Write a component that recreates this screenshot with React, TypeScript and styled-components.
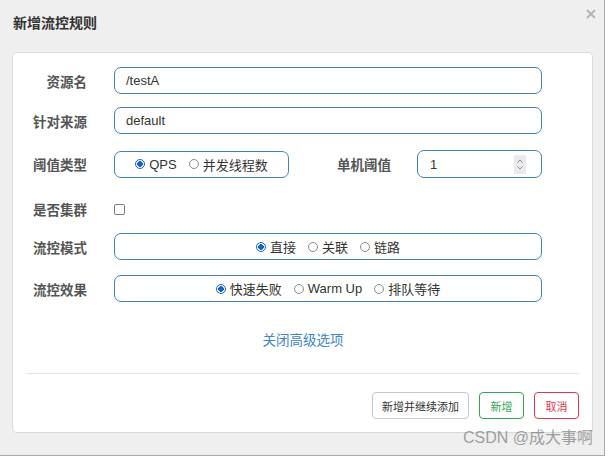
import React from "react";
import styled, { createGlobalStyle, css } from "styled-components";

const GlobalStyle = createGlobalStyle`
  html, body {
    margin: 0;
    padding: 0;
    background: #fff;
  }
  body {
    font-family: "Liberation Sans", "Noto Sans CJK SC", sans-serif;
  }
  * {
    box-sizing: border-box;
  }
`;

const FONT = `"Liberation Sans", "Noto Sans CJK SC", sans-serif`;
const BLUE = "#3f80c2";

const Page = styled.div`
  position: relative;
  width: 608px;
  height: 457px;
`;

const Dialog = styled.div`
  width: 605px;
  height: 456px;
  background: #efefef;
  border-right: 1px solid #a9a9a9;
  border-bottom: 1px solid #a9a9a9;
`;

const Header = styled.div`
  height: 52px;
  display: flex;
  justify-content: space-between;
  align-items: flex-start;
  padding: 9px 8px 0 13px;
`;

const Title = styled.h3`
  margin: 5px 0 0;
  font-size: 14px;
  line-height: 18px;
  font-weight: 700;
  color: #333;
`;

const Close = styled.button`
  display: flex;
  padding: 0;
  border: 0;
  background: none;
  cursor: pointer;
`;

const Card = styled.div`
  margin-left: 12px;
  width: 581px;
  background: #fff;
  border: 1px solid #dadada;
  border-radius: 5px;
  padding: 14px 13px 13px 14px;
`;

const FormRow = styled.div<{ $mt: number; $h?: number }>`
  display: grid;
  grid-template-columns: 60px 428px;
  column-gap: 27px;
  align-items: center;
  height: ${(p) => p.$h ?? 27}px;
  margin-top: ${(p) => p.$mt}px;
`;

const Label = styled.label`
  text-align: right;
  font-size: 13.5px;
  font-weight: 700;
  color: #555;
  white-space: nowrap;
`;

const TextInput = styled.input`
  width: 100%;
  height: 27px;
  border: 1px solid ${BLUE};
  border-radius: 7px;
  padding: 0 11px;
  font: 13px ${FONT};
  color: #333;
  background: #fff;
  outline: none;
`;

const RadioBox = styled.div<{ $width?: number }>`
  width: ${(p) => (p.$width ? `${p.$width}px` : "100%")};
  height: 27px;
  border: 1px solid ${BLUE};
  border-radius: 7px;
  display: flex;
  align-items: center;
  justify-content: center;
  gap: 12px;
`;

const RadioItem = styled.label`
  display: inline-flex;
  align-items: center;
  gap: 4px;
  font-size: 13px;
  color: #333;
  white-space: nowrap;
`;

const Dot = styled.span<{ $checked?: boolean }>`
  width: 10px;
  height: 10px;
  border-radius: 50%;
  flex: none;
  ${(p) =>
    p.$checked
      ? css`
          border: 1px solid #0f62d0;
          background: radial-gradient(circle, #0f62d0 0 2.6px, #fff 3px);
        `
      : css`
          border: 1px solid #8a8a8a;
          background: #fff;
        `}
`;

const ThresholdLine = styled.div`
  display: grid;
  grid-template-columns: 175px 76px 125px;
  column-gap: 26px;
  align-items: center;
`;

const SubLabel = styled(Label)`
  text-align: right;
`;

const NumberField = styled.div`
  height: 28px;
  border: 1px solid ${BLUE};
  border-radius: 7px;
  display: flex;
  align-items: center;
  padding: 0 15px 0 12px;
`;

const NumberValue = styled.input`
  flex: 1;
  min-width: 0;
  border: 0;
  padding: 0;
  outline: none;
  font: 13px ${FONT};
  color: #333;
  background: transparent;
`;

const Spinner = styled.span`
  width: 12px;
  height: 19px;
  background: #e9e9ee;
  display: flex;
  align-items: center;
  justify-content: center;
`;

const CheckBox = styled.span`
  width: 11px;
  height: 11px;
  border: 1.5px solid #7b7b8e;
  border-radius: 2px;
  background: #fff;
`;

const AdvancedLink = styled.a`
  display: block;
  margin-top: 29px;
  text-align: center;
  font-size: 13.5px;
  line-height: 20px;
  color: #3a87c9;
  text-decoration: none;
  cursor: pointer;
`;

const Divider = styled.div`
  height: 1px;
  margin-top: 22px;
  background: #e4e4e4;
`;

const ButtonRow = styled.div`
  margin-top: 18px;
  display: flex;
  justify-content: flex-end;
  gap: 10px;
`;

const buttonColors = {
  default: { border: "#c8c8c8", color: "#333" },
  success: { border: "#2fa84f", color: "#2fa84f" },
  danger: { border: "#e0394a", color: "#e0394a" },
};

const Button = styled.button<{ $variant: keyof typeof buttonColors }>`
  height: 27px;
  min-width: 45px;
  padding: 0 9px;
  border-radius: 4px;
  background: #fff;
  font: 11px ${FONT};
  border: 1px solid ${(p) => buttonColors[p.$variant].border};
  color: ${(p) => buttonColors[p.$variant].color};
  cursor: pointer;
`;

const Watermark = styled.div`
  position: absolute;
  right: 15px;
  top: 429px;
  font-size: 16px;
  line-height: 18px;
  color: rgba(120, 120, 120, 0.7);
  white-space: nowrap;
  pointer-events: none;
`;

type Option = { text: string; checked?: boolean };

const RadioGroup = ({ options, width }: { options: Option[]; width?: number }) => (
  <RadioBox $width={width}>
    {options.map((o) => (
      <RadioItem key={o.text}>
        <Dot $checked={o.checked} />
        {o.text}
      </RadioItem>
    ))}
  </RadioBox>
);

export default function App() {
  return (
    <Page>
      <GlobalStyle />
      <Dialog>
        <Header>
          <Title>新增流控规则</Title>
          <Close aria-label="close">
            <svg width="10" height="10" viewBox="0 0 10 10">
              <path d="M1 1L9 9M9 1L1 9" stroke="#b3b3b3" strokeWidth="1.8" />
            </svg>
          </Close>
        </Header>
        <Card>
          <FormRow $mt={0}>
            <Label>资源名</Label>
            <TextInput readOnly value="/testA" />
          </FormRow>
          <FormRow $mt={13}>
            <Label>针对来源</Label>
            <TextInput readOnly value="default" />
          </FormRow>
          <FormRow $mt={16} $h={28}>
            <Label>阈值类型</Label>
            <ThresholdLine>
              <RadioGroup width={175} options={[{ text: "QPS", checked: true }, { text: "并发线程数" }]} />
              <SubLabel>单机阈值</SubLabel>
              <NumberField>
                <NumberValue readOnly value="1" />
                <Spinner>
                  <svg width="8" height="13" viewBox="0 0 8 13">
                    <path d="M1.5 4.5L4 2L6.5 4.5M1.5 8.5L4 11L6.5 8.5" fill="none" stroke="#8c8c95" strokeWidth="1" />
                  </svg>
                </Spinner>
              </NumberField>
            </ThresholdLine>
          </FormRow>
          <FormRow $mt={17} $h={28}>
            <Label>是否集群</Label>
            <CheckBox />
          </FormRow>
          <FormRow $mt={10}>
            <Label>流控模式</Label>
            <RadioGroup options={[{ text: "直接", checked: true }, { text: "关联" }, { text: "链路" }]} />
          </FormRow>
          <FormRow $mt={15}>
            <Label>流控效果</Label>
            <RadioGroup options={[{ text: "快速失败", checked: true }, { text: "Warm Up" }, { text: "排队等待" }]} />
          </FormRow>
          <AdvancedLink>关闭高级选项</AdvancedLink>
          <Divider />
          <ButtonRow>
            <Button $variant="default">新增并继续添加</Button>
            <Button $variant="success">新增</Button>
            <Button $variant="danger">取消</Button>
          </ButtonRow>
        </Card>
      </Dialog>
      <Watermark>CSDN @成大事啊</Watermark>
    </Page>
  );
}
